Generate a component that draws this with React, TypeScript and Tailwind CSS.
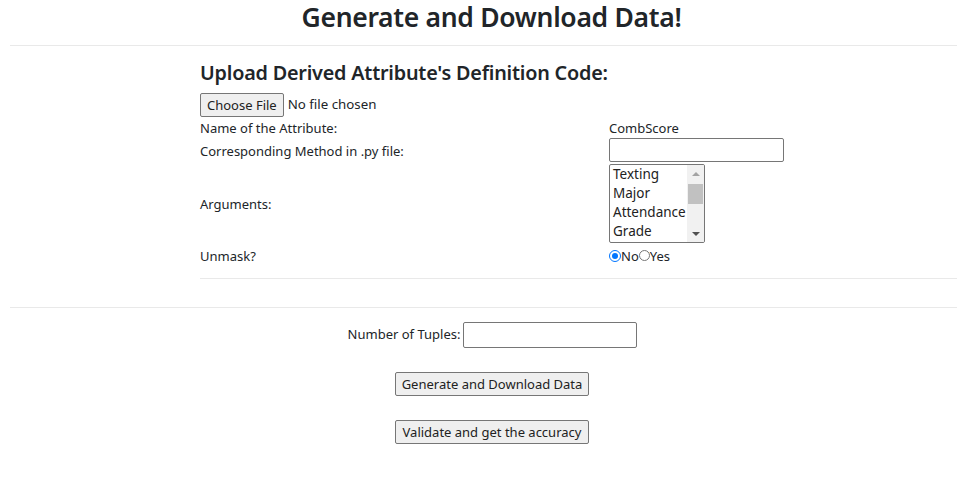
import React from "react";

const font = { fontFamily: '"Noto Sans", "Open Sans", sans-serif' };

const Radio = ({ checked }: { checked?: boolean }) =>
  checked ? (
    <span className="inline-flex items-center justify-center w-[12px] h-[12px] rounded-full border-[1.5px] border-[#0075ff] bg-white">
      <span className="w-[6px] h-[6px] rounded-full bg-[#0075ff]" />
    </span>
  ) : (
    <span className="inline-block w-[11px] h-[11px] rounded-full border border-[#767676] bg-white" />
  );

const ArgList = () => (
  <div className="flex w-[96px] h-[79px] border border-[#767676] rounded-[2px] bg-white overflow-hidden">
    <div className="flex-1 flex flex-col pl-[3px] text-[13.5px] leading-[19px] text-[#222]">
      <span>Texting</span>
      <span>Major</span>
      <span>Attendance</span>
      <span>Grade</span>
    </div>
    <div className="w-[17px] bg-[#f1f1f1] flex flex-col items-center">
      <div className="h-[17px] flex items-center justify-center">
        <span className="w-0 h-0 border-l-[4px] border-r-[4px] border-b-[4px] border-l-transparent border-r-transparent border-b-[#a3a3a3]" />
      </div>
      <div className="w-[15px] h-[20px] bg-[#c1c1c1] mt-[2px]" />
      <div className="flex-1" />
      <div className="h-[17px] flex items-center justify-center">
        <span className="w-0 h-0 border-l-[4px] border-r-[4px] border-t-[4px] border-l-transparent border-r-transparent border-t-[#505050]" />
      </div>
    </div>
  </div>
);

const Btn = ({ children, wide }: { children: React.ReactNode; wide?: boolean }) => (
  <button
    className={
      "h-[24px] bg-[#efefef] border border-[#767676] rounded-[2px] text-[13px] leading-[20px] text-[#222] whitespace-nowrap " +
      (wide ? "w-[194px] px-0" : "px-[6px]")
    }
  >
    {children}
  </button>
);

export default function App() {
  return (
    <div className="w-[957px] h-[487px] bg-white text-[#212529]" style={font}>
      <h1 className="text-center pl-[26px] text-[26.5px] leading-[34px] font-semibold tracking-[-0.3px]">
        Generate and Download Data!
      </h1>
      <hr className="ml-[10px] mt-[11px] border-t border-[#e9e9e9]" />

      <div className="ml-[200px] pt-[13px]">
        <h2 className="text-[19.8px] leading-[28px] font-semibold tracking-[-0.2px]">
          Upload Derived Attribute's Definition Code:
        </h2>
        <div className="flex items-center gap-[4px] mt-[6px] text-[13.3px]">
          <Btn>Choose File</Btn>
          <span>No file chosen</span>
        </div>
        <div className="grid grid-cols-[409px_1fr] text-[13px] leading-[20px] mt-[1px]">
          <span>Name of the Attribute:</span>
          <span>CombScore</span>
          <span className="self-center">Corresponding Method in .py file:</span>
          <div className="pb-[2px]">
            <input className="w-[175px] h-[24px] border border-[#767676] rounded-[2px] bg-white" />
          </div>
          <span className="self-center">Arguments:</span>
          <div>
            <ArgList />
          </div>
          <span className="self-center">Unmask?</span>
          <div className="flex items-center text-[13px] h-[25px]">
            <Radio checked />
            <span>No</span>
            <Radio />
            <span>Yes</span>
          </div>
        </div>
        <hr className="mt-[10px] border-t border-[#e9e9e9]" />
      </div>

      <hr className="ml-[10px] mt-[28px] border-t border-[#e9e9e9]" />

      <div className="flex flex-col items-center pt-[14px] pl-[27px]">
        <div className="flex items-center gap-[3px] text-[13px] pl-[1px]">
          <span>Number of Tuples:</span>
          <input className="w-[174px] h-[26px] border border-[#767676] rounded-[2px] bg-white" />
        </div>
        <div className="mt-[23px]">
          <Btn wide>Generate and Download Data</Btn>
        </div>
        <div className="mt-[23px]">
          <Btn wide>Validate and get the accuracy</Btn>
        </div>
      </div>
    </div>
  );
}
